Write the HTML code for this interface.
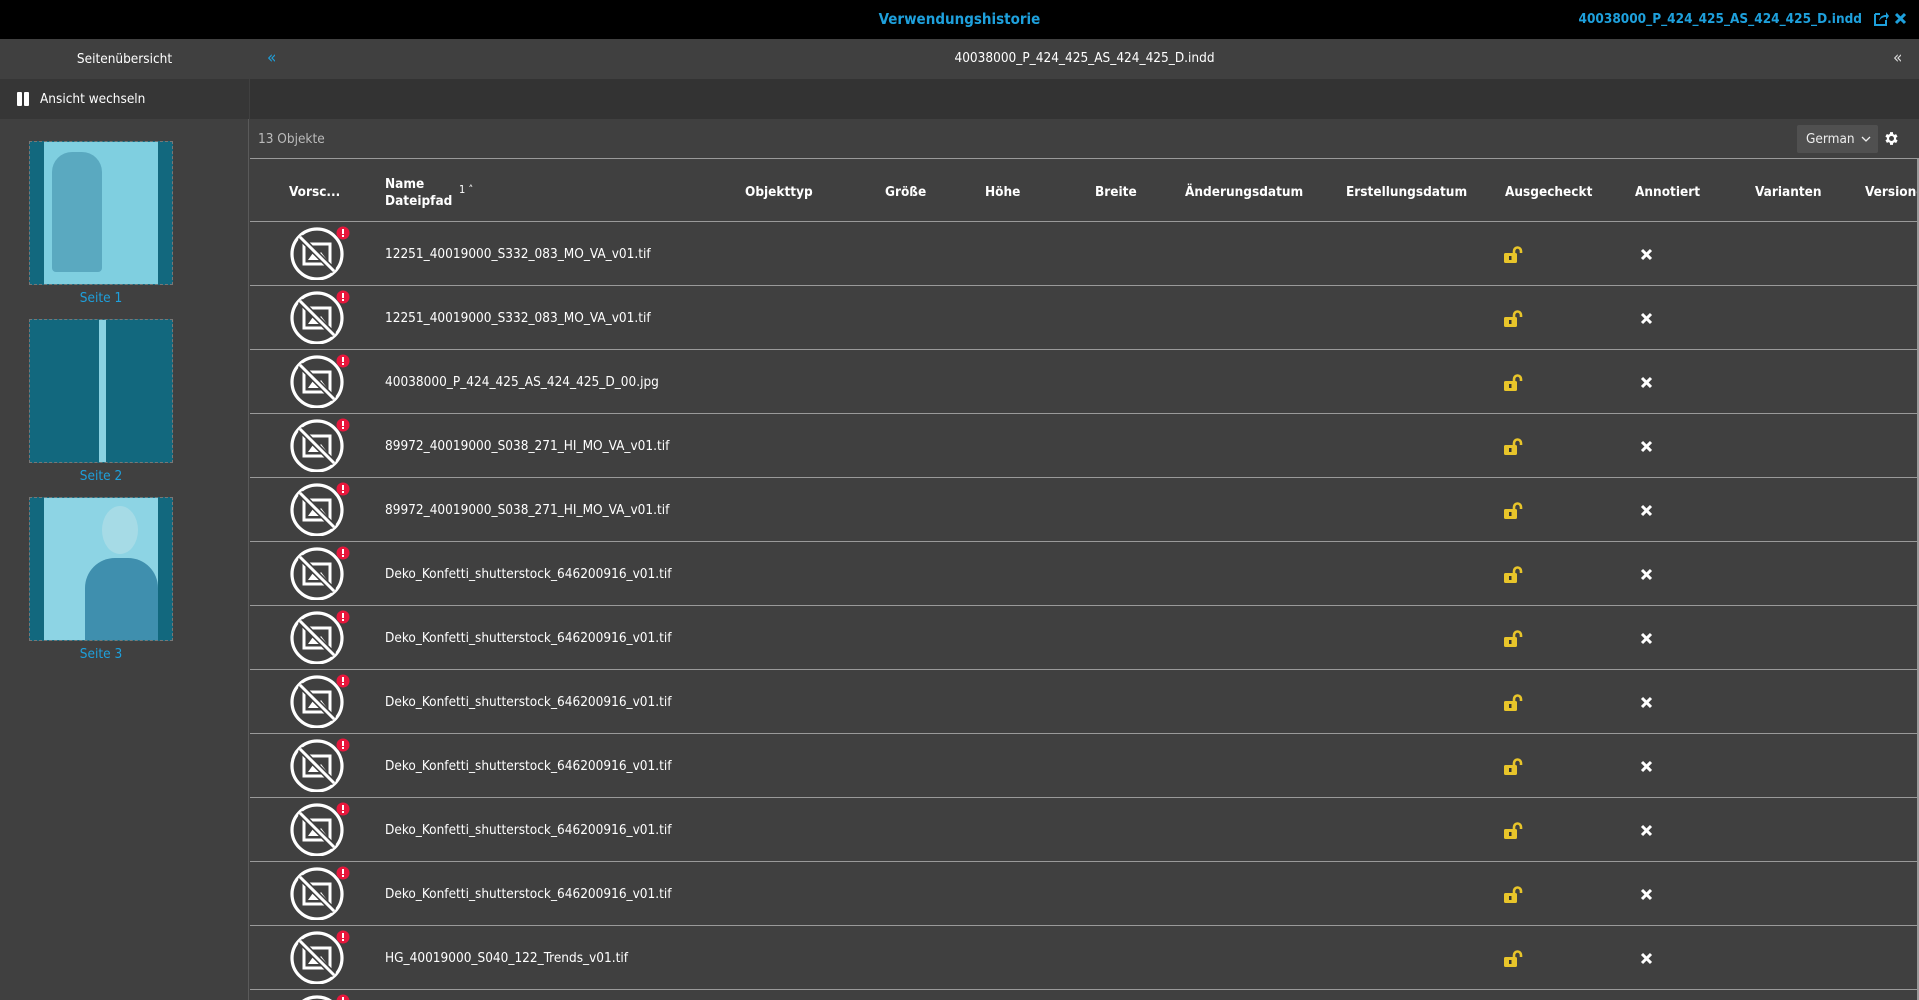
<!DOCTYPE html>
<html><head><meta charset="utf-8">
<style>
*{margin:0;padding:0;box-sizing:border-box}
html,body{width:1919px;height:1000px;overflow:hidden}
body{background:#404040;font-family:"DejaVu Sans Condensed","DejaVu Sans","Liberation Sans",sans-serif;color:#fff;position:relative}
#wrap{position:absolute;left:0;top:0;width:1919px;height:1000px;overflow:hidden}
.abs{position:absolute}
.top{left:0;top:0;width:1919px;height:39px;background:#000}
.blue{color:#1ea0dc}
.side{left:0;top:39px;width:249px;height:961px;background:#404040;border-right:1px solid #5a5a5a}
.thumb{left:29px;width:144px;height:144px;background:#12687e;border:1px dashed #777}
.lbl{left:29px;width:144px;text-align:center;font-size:13.5px;color:#1ea0dc}
.row{left:250px;width:1667px;height:64px;border-bottom:1.5px solid #9a9a9a;overflow:hidden}
.th{font-size:13.5px;font-weight:bold;top:184px;text-align:center}
.fn{font-size:13.5px;top:24px}
</style></head><body><div id="wrap">
<div class="abs top"></div>
<div class="abs blue" style="left:0;width:1919px;top:10px;text-align:center;font-size:15px;font-weight:bold">Verwendungshistorie</div>
<div class="abs blue" style="right:57px;top:11px;font-size:13.5px;font-weight:bold">40038000_P_424_425_AS_424_425_D.indd</div>
<svg class="abs" style="left:1874px;top:11px" width="15" height="15" viewBox="0 0 15 15"><path d="M1 3h5M1 3v11h11v-5" stroke="#1ea0dc" stroke-width="2" fill="none"/><path d="M5 10c1-5 4-6 7-6V1l3 4-3 4V6c-3 0-5 1-7 4z" fill="#1ea0dc"/></svg>
<svg class="abs" style="left:1894px;top:12px" width="13" height="13" viewBox="0 0 13 13"><path d="M2 2l9 9M11 2l-9 9" stroke="#1ea0dc" stroke-width="3"/></svg>

<div class="abs side"></div>
<div class="abs" style="left:0;top:39px;width:249px;height:40px;background:#404040;text-align:center;font-size:13.5px;line-height:40px">Seitenübersicht</div>
<div class="abs" style="left:0;top:79px;width:249px;height:40px;background:#363636;font-size:13.5px;line-height:40px;padding-left:40px">Ansicht wechseln</div>
<div class="abs" style="left:17px;top:92px;width:5px;height:14px;background:#fff;border-radius:1px"></div>
<div class="abs" style="left:24px;top:92px;width:5px;height:14px;background:#fff;border-radius:1px"></div>

<div class="abs thumb" style="top:141px"><div class="abs" style="left:14px;top:0;width:114px;height:142px;background:#7fcfe0"></div><div class="abs" style="left:22px;top:10px;width:50px;height:120px;background:#5aa9c0;border-radius:20px 20px 4px 4px"></div></div>
<div class="abs lbl" style="top:290px">Seite 1</div>
<div class="abs thumb" style="top:319px"><div class="abs" style="left:69px;top:0;width:7px;height:142px;background:#8ad2e2"></div></div>
<div class="abs lbl" style="top:468px">Seite 2</div>
<div class="abs thumb" style="top:497px"><div class="abs" style="left:14px;top:0;width:114px;height:142px;background:#8dd4e4"></div><div class="abs" style="left:55px;top:60px;width:73px;height:82px;background:#3f8fae;border-radius:30px 30px 0 0"></div><div class="abs" style="left:72px;top:8px;width:36px;height:48px;background:#a6dbe6;border-radius:50%"></div></div>
<div class="abs lbl" style="top:646px">Seite 3</div>

<div class="abs" style="left:250px;top:39px;width:1669px;height:40px;background:#404040"></div>
<div class="abs blue" style="left:267px;top:48px;font-size:17px">«</div>
<div class="abs" style="left:250px;width:1669px;top:50px;text-align:center;font-size:13.5px">40038000_P_424_425_AS_424_425_D.indd</div>
<div class="abs" style="left:1893px;top:48px;font-size:17px;color:#ddd">«</div>
<div class="abs" style="left:250px;top:79px;width:1669px;height:40px;background:#333"></div>
<div class="abs" style="left:250px;top:119px;width:1669px;height:40px;border-bottom:1.5px solid #9a9a9a"></div>
<div class="abs" style="left:258px;top:131px;font-size:13.5px;color:#bbb">13 Objekte</div>
<div class="abs" style="left:1797px;top:125px;width:81px;height:28px;background:#505050;border-radius:2px;font-size:13.5px;line-height:28px;padding-left:9px;color:#eee">German</div>
<svg class="abs" style="left:1861px;top:135px" width="10" height="8" viewBox="0 0 10 8"><path d="M1 2l4 4 4-4" stroke="#eee" stroke-width="1.3" fill="none"/></svg>
<svg class="abs" style="left:1883px;top:130px" width="17" height="17" viewBox="0 0 24 24"><path fill="#fff" d="M19.4 13a7.5 7.5 0 000-2l2.1-1.6-2-3.5-2.5 1a7 7 0 00-1.7-1L15 3h-4l-.4 2.7a7 7 0 00-1.7 1l-2.5-1-2 3.5L6.6 11a7.5 7.5 0 000 2l-2.1 1.6 2 3.5 2.5-1a7 7 0 001.7 1L11 21h4l.4-2.7a7 7 0 001.7-1l2.5 1 2-3.5zM13 15.5a3.5 3.5 0 110-7 3.5 3.5 0 010 7z" transform="translate(-1 0)"/></svg>

<div class="abs" style="left:250px;top:159px;width:1667px;height:63px;border-bottom:1.5px solid #9a9a9a"></div>
<div class="abs th" style="left:289px">Vorsc...</div>
<div class="abs" style="left:385px;top:176px;font-size:13.5px;font-weight:bold;line-height:17px">Name<br>Dateipfad</div>
<div class="abs" style="left:459px;top:183px;font-size:11px">1 ˄</div>
<div class="abs th" style="left:745px">Objekttyp</div>
<div class="abs th" style="left:885px">Größe</div>
<div class="abs th" style="left:985px">Höhe</div>
<div class="abs th" style="left:1095px">Breite</div>
<div class="abs th" style="left:1185px">Änderungsdatum</div>
<div class="abs th" style="left:1346px">Erstellungsdatum</div>
<div class="abs th" style="left:1505px">Ausgecheckt</div>
<div class="abs th" style="left:1635px">Annotiert</div>
<div class="abs th" style="left:1755px">Varianten</div>
<div class="abs" style="left:1865px;top:184px;width:52px;overflow:hidden;white-space:nowrap;font-size:13.5px;font-weight:bold">Versionen</div>
<div class="abs" style="left:1917px;top:159px;width:2px;height:841px;background:#9a9a9a"></div>

<div id="rows"></div>
</div>
<script>
var names=["12251_40019000_S332_083_MO_VA_v01.tif","12251_40019000_S332_083_MO_VA_v01.tif","40038000_P_424_425_AS_424_425_D_00.jpg","89972_40019000_S038_271_HI_MO_VA_v01.tif","89972_40019000_S038_271_HI_MO_VA_v01.tif","Deko_Konfetti_shutterstock_646200916_v01.tif","Deko_Konfetti_shutterstock_646200916_v01.tif","Deko_Konfetti_shutterstock_646200916_v01.tif","Deko_Konfetti_shutterstock_646200916_v01.tif","Deko_Konfetti_shutterstock_646200916_v01.tif","Deko_Konfetti_shutterstock_646200916_v01.tif","HG_40019000_S040_122_Trends_v01.tif","HG_40019000_S040_122_Trends_v01.tif"];
var h="";
for(var i=0;i<13;i++){var t=222+i*64;var hh=(i==12)?10:64;
h+='<div class="abs row" style="top:'+t+'px;height:'+hh+'px;'+(i==12?'border-bottom:0;':'')+'">'+
'<svg class="abs" style="left:40px;top:4px" width="60" height="54" viewBox="0 0 60 54"><circle cx="27" cy="28" r="25" fill="none" stroke="#fff" stroke-width="3.2"/><rect x="14" y="18" width="26" height="20" fill="none" stroke="#fff" stroke-width="3"/><path d="M18 34l5-7 4 4 4-5 6 8z" fill="#fff"/><path d="M10 11l34 34" stroke="#404040" stroke-width="6"/><path d="M10 11l34 34" stroke="#fff" stroke-width="3"/><circle cx="53" cy="7" r="6.5" fill="#e8173c"/><rect x="52" y="3" width="2" height="5" fill="#fff"/><rect x="52" y="9" width="2" height="2" fill="#fff"/></svg>'+
'<div class="abs fn" style="left:135px">'+names[i]+'</div>'+
'<svg class="abs" style="left:1253px;top:24px" width="20" height="17" viewBox="0 0 20 17"><path d="M11 8V5a3.5 3.5 0 017 0v2" fill="none" stroke="#e8c52a" stroke-width="2.6"/><rect x="1" y="7" width="13" height="10" rx="1.5" fill="#e8c52a"/><rect x="6" y="10" width="2.5" height="4" fill="#333"/></svg>'+
'<svg class="abs" style="left:1390px;top:26px" width="13" height="13" viewBox="0 0 13 13"><path d="M2 2l9 9M11 2l-9 9" stroke="#fff" stroke-width="3"/></svg>'+
'</div>';}
document.getElementById("rows").innerHTML=h;
</script>
</body></html>
